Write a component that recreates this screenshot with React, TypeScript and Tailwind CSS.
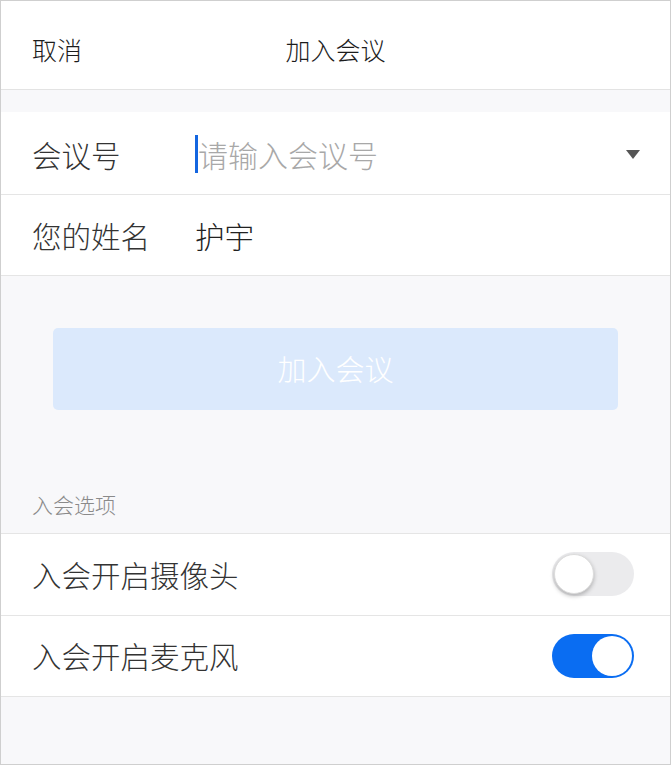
const font = "font-['Noto_Sans_CJK_SC','Noto_Sans',sans-serif]"

const Toggle = ({ on }: { on: boolean }) => (
  <div
    className={`w-[82px] h-[44px] rounded-full p-[2px] flex ${
      on ? "bg-[#0a6df2] justify-end" : "bg-[#ebebed] justify-start"
    }`}
  >
    <div
      className={`w-[40px] h-[40px] rounded-full bg-white ${
        on ? "" : "shadow-[0_2px_4px_rgba(0,0,0,0.25)] border border-[#dcdcdc]"
      }`}
    />
  </div>
)

const App = () => {
  return (
    <div
      className={`w-[671px] h-[765px] bg-[#f8f8fa] border border-[#cfcfcf] flex flex-col font-light ${font}`}
    >
      <div className="h-[89px] bg-white border-b border-[#e3e3e3] relative flex items-center pt-[10px] px-[31px]">
        <span className="text-[25px] text-[#1c1c1c]">取消</span>
        <span className="absolute left-0 right-0 text-center text-[25px] text-[#1c1c1c] pointer-events-none">
          加入会议
        </span>
      </div>

      <div className="h-[22px]" />

      <div className="bg-white">
        <div className="h-[83px] border-b border-[#e5e5e5] flex items-center pt-[2px] pl-[31px] pr-[30px]">
          <span className="w-[163px] text-[29.5px] text-[#333]">会议号</span>
          <div className="flex-1 flex items-center">
            <div className="w-[3px] h-[38px] bg-[#1466e0]" />
            <span className="text-[30px] text-[#a8a8a8]">请输入会议号</span>
          </div>
          <svg width="14" height="9" viewBox="0 0 14 9">
            <path d="M0 0 H14 L7 9 Z" fill="#555" />
          </svg>
        </div>
        <div className="h-[81px] border-b border-[#e5e5e5] flex items-center pl-[31px]">
          <span className="w-[163px] text-[29.5px] text-[#333]">您的姓名</span>
          <span className="text-[29.5px] text-[#222]">护宇</span>
        </div>
      </div>

      <div className="px-[52px] pt-[52px]">
        <button className="w-full h-[82px] rounded-[5px] bg-[#dbe9fc] text-white text-[29px]">
          加入会议
        </button>
      </div>

      <div className="pl-[31px] pt-[79px] pb-[12px] text-[21px] text-[#8a8a8a]">
        入会选项
      </div>

      <div className="bg-white border-t border-[#e5e5e5]">
        <div className="h-[82px] border-b border-[#e5e5e5] flex items-center justify-between pl-[31px] pr-[36px]">
          <span className="text-[29.5px] text-[#333]">入会开启摄像头</span>
          <Toggle on={false} />
        </div>
        <div className="h-[81px] border-b border-[#e5e5e5] flex items-center justify-between pl-[31px] pr-[36px]">
          <span className="text-[29.5px] text-[#333]">入会开启麦克风</span>
          <Toggle on={true} />
        </div>
      </div>
    </div>
  )
}

export default App
